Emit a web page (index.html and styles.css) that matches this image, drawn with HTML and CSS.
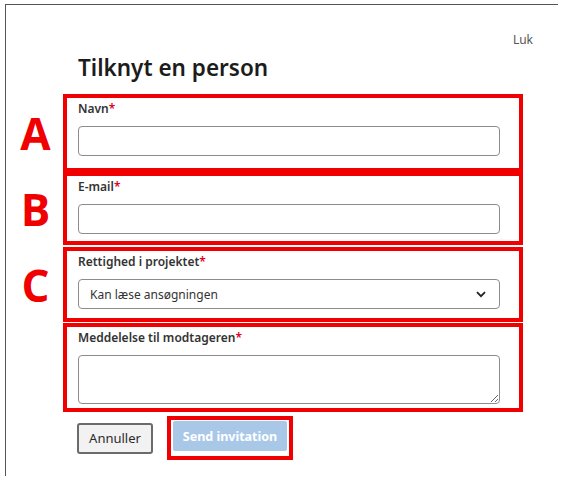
FILE: index.html
```html
<!DOCTYPE html>
<html>

<head>
<meta charset="utf-8">
<link rel="stylesheet" href="styles.css">
</head>

<body>
  <div class="dialog">
    <div class="topbar">
      <a href="#" class="closelink">Luk</a>
    </div>

    <h2 class="title">Tilknyt en person</h2>

    <form class="inviteform">
      <div class="row">
        <span class="marker">A</span>
        <div class="field">
          <label for="navn">Navn<span class="req">*</span></label>
          <input type="text" id="navn" class="textfield">
        </div>
      </div>

      <div class="row">
        <span class="marker">B</span>
        <div class="field field-b">
          <label for="email">E-mail<span class="req">*</span></label>
          <input type="text" id="email" class="textfield">
        </div>
      </div>

      <div class="row row-c">
        <span class="marker">C</span>
        <div class="field field-c">
          <label for="rettighed">Rettighed i projektet<span class="req">*</span></label>
          <div class="selectwrap">
            <select id="rettighed" class="selectfield">
              <option>Kan læse ansøgningen</option>
              <option>Kan redigere ansøgningen</option>
            </select>
            <svg class="chevron" width="10" height="7" viewBox="0 0 10 7">
              <path d="M1 1.2 L5 5.2 L9 1.2" fill="none" stroke="#222" stroke-width="1.8"/>
            </svg>
          </div>
        </div>
      </div>

      <div class="row row-d">
        <span class="marker"></span>
        <div class="field field-d">
          <label for="besked">Meddelelse til modtageren<span class="req">*</span></label>
          <textarea id="besked" class="messagefield"></textarea>
        </div>
      </div>

      <div class="actions">
        <button type="button" class="cancelbutton">Annuller</button>
        <span class="sendframe">
          <button type="button" class="sendbutton" disabled>Send invitation</button>
        </span>
      </div>
    </form>
  </div>
</body>
</html>
```

FILE: styles.css
```css
* {
  box-sizing: border-box;
}

body {
  margin: 0;
  background: #fff;
  font-family: "Noto Sans", "Open Sans", sans-serif;
  color: #222;
}

/* Dialog frame, only the top and left edges show */
.dialog {
  margin: 4px 0 0 5px;
  width: 553px;
  height: 472px;
  border-top: 1px solid #555;
  border-left: 1px solid #555;
}

.topbar {
  display: flex;
  justify-content: flex-end;
  padding: 27px 25px 0 0;
}

.closelink {
  font-size: 12px;
  line-height: 16px;
  color: #555;
  text-decoration: none;
}

.title {
  margin: 6px 0 12px 72px;
  font-size: 22.5px;
  line-height: 28px;
  font-weight: 600;
  color: #1c1c1c;
}

/* Rows with the red letter beside each field */
.row {
  display: flex;
  align-items: center;
}

.row-c {
  margin-top: 2px;
}

.row-d {
  margin-top: 1px;
}

.marker {
  width: 57px;
  padding-left: 2px;
  text-align: center;
  font-family: "Open Sans", "Liberation Sans", sans-serif;
  font-weight: 700;
  font-size: 44px;
  line-height: 1;
  color: #f00000;
}

.field {
  width: 460px;
  border: 4px solid #f00000;
  padding: 3px 19px 12px 11px;
}

.field-b {
  padding-bottom: 7px;
}

.field-c {
  padding-bottom: 9px;
}

.field-d {
  padding-bottom: 4px;
}

.field label {
  display: block;
  font-size: 12px;
  line-height: 16px;
  font-weight: 600;
  color: #333;
  margin-bottom: 9px;
}

.req {
  color: #e0001b;
}

.textfield,
.selectfield,
.messagefield {
  display: block;
  width: 100%;
  border: 1px solid #8c8c8c;
  border-radius: 4px;
  background: #fff;
  font-family: inherit;
  font-size: 12px;
  color: #333;
}

.textfield {
  height: 30px;
}

.selectwrap {
  position: relative;
}

.selectfield {
  height: 30px;
  padding: 0 30px 0 11px;
  appearance: none;
  -webkit-appearance: none;
}

.chevron {
  position: absolute;
  right: 14px;
  top: 12px;
}

.messagefield {
  height: 49px;
  resize: vertical;
}

/* Buttons */
.actions {
  display: flex;
  align-items: center;
  gap: 14px;
  padding: 4px 0 0 71px;
}

.cancelbutton {
  width: 76px;
  height: 31px;
  border: 2px solid #6b6b6b;
  border-radius: 3px;
  background: #f2f2f2;
  font-family: inherit;
  font-size: 13px;
  color: #2a2a2a;
}

.sendframe {
  display: block;
  border: 4px solid #f00000;
  padding: 1px 2px 5px 2px;
}

.sendbutton {
  display: block;
  width: 114px;
  height: 30px;
  border: none;
  border-radius: 2px;
  background: #a9c8e8;
  font-family: inherit;
  font-size: 12.5px;
  font-weight: 700;
  color: #fff;
}
```
